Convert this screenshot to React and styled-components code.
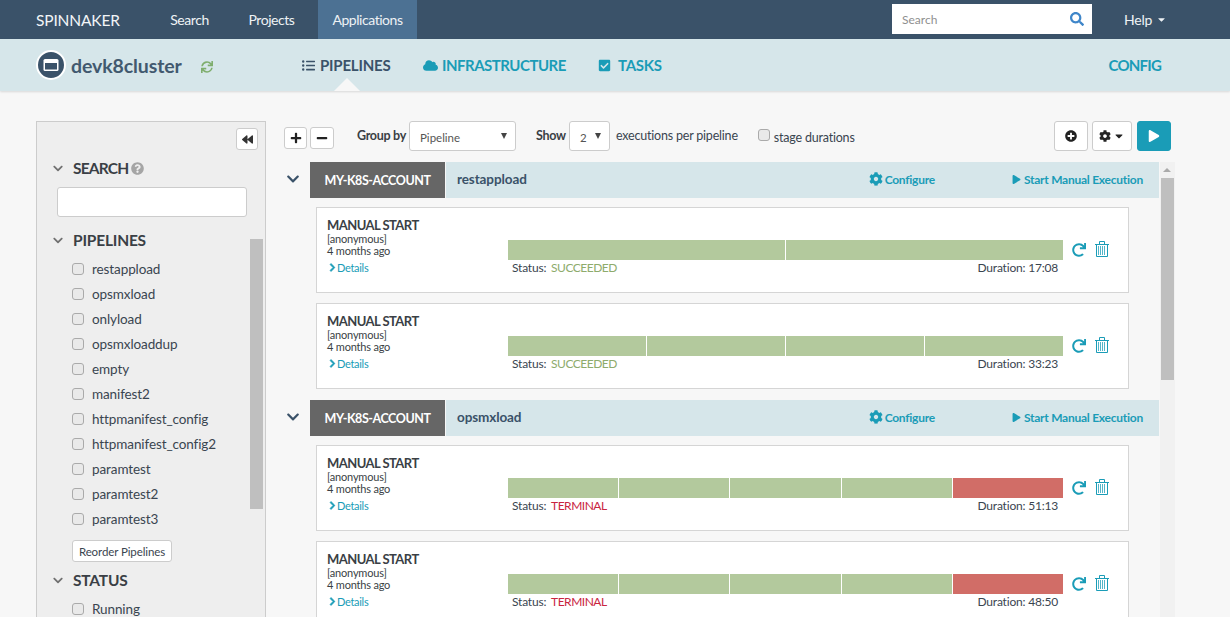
import React from "react";
import styled, { createGlobalStyle } from "styled-components";
import {
  FaListUl, FaCloud, FaCheckSquare, FaCog, FaPlay, FaChevronDown, FaChevronRight, FaSync, FaRedo,
  FaSearch, FaBackward, FaPlus, FaMinus, FaPlusCircle, FaQuestionCircle, FaCaretDown,
} from "react-icons/fa";

const teal = "#1a9cb7";
const navy = "#3a5269";
const ff = `"Lato", "Noto Sans", sans-serif`;

const Global = createGlobalStyle`
  html, body { margin: 0; padding: 0; height: 617px; overflow: hidden; background: #f7f7f7; }
  body { font-family: ${ff}; font-size: 13px; color: #333; }
  * { box-sizing: border-box; }
`;

const Page = styled.div`height: 617px; overflow: hidden; display: flex; flex-direction: column;`;
const TopNav = styled.nav`height: 39px; background: ${navy}; display: flex; align-items: stretch; padding-left: 36px; flex: none; color: #fff;`;
const Brand = styled.div`font-size: 15.5px; width: 134px; display: flex; align-items: center; letter-spacing: -0.15px; color: #f2f5f7;`;
const NavItem = styled.div`
  display: flex; align-items: center; font-size: 14px; letter-spacing: -0.45px; color: #eef2f5;
  margin-left: ${p => p.$ml ?? 0}px; width: ${p => p.$w}px; justify-content: center;
  background: ${p => (p.$active ? "#4c7193" : "transparent")};
`;
const NavSpacer = styled.div`flex: 1;`;
const SearchBox = styled.div`
  width: 200px; height: 30px; margin-top: 4px; background: #fff; display: flex; align-items: center;
  justify-content: space-between; padding: 0 8px 0 10px; font-size: 12px; color: #8f8f8f;
  svg { color: #3f86c9; font-size: 14px; }
`;
const Help = styled.div`width: 138px; padding-left: 32px; display: flex; align-items: center; gap: 4px; font-size: 14px; letter-spacing: -0.2px; color: #eef2f5; svg { font-size: 11px; }`;

const SubHeader = styled.header`
  height: 52px; background: #d6e6ea; flex: none; display: flex; align-items: center; position: relative;
  padding-left: 36px; box-shadow: 0 1px 2px rgba(0,0,0,.12);
`;
const AppBadge = styled.svg`width: 30px; height: 30px; flex: none;`;
const AppName = styled.div`font-size: 19.5px; font-weight: 700; color: ${navy}; margin-left: 5px; width: 130px; letter-spacing: -0.1px; opacity: .95;`;
const SyncIcon = styled(FaSync)`color: #7fae6e; font-size: 12px; margin-top: 4px;`;
const Tabs = styled.div`display: flex; margin-left: 89px; flex: 1; align-items: center;`;
const Tab = styled.div`
  display: flex; align-items: center; gap: ${p => p.$gap ?? 5}px; font-size: 15px; font-weight: 700;
  letter-spacing: ${p => p.$ls ?? -0.2}px; color: ${p => (p.$active ? navy : teal)}; width: ${p => p.$w}px;
  svg { font-size: ${p => p.$icon ?? 13}px; flex: none; }
`;
const ConfigTab = styled(Tab)`width: auto; margin-right: 69px;`;
const Notch = styled.div`
  position: absolute; left: 334px; bottom: 0; width: 0; height: 0;
  border-left: 13px solid transparent; border-right: 13px solid transparent; border-bottom: 13px solid #f7f7f7;
`;

const Body = styled.div`flex: 1; display: flex; padding: 30px 0 0 36px; min-height: 0;`;
const Sidebar = styled.aside`
  width: 230px; flex: none; background: #eee; border: 1px solid #ccc; height: 520px; position: relative;
  padding: 6px 0 0 15px; overflow: hidden;
`;
const CollapseRow = styled.div`display: flex; justify-content: flex-end; padding-right: 7px; height: 22px;`;
const CollapseBtn = styled.div`
  width: 22px; height: 22px; background: #fff; border: 1px solid #ccc; border-radius: 3px; display: flex;
  align-items: center; justify-content: center; color: #333; svg { font-size: 11px; }
`;
const SideHead = styled.div`
  display: flex; align-items: center; height: 20px; font-size: 15.5px; font-weight: 700; color: #3a3f45; letter-spacing: ${p => p.$ls ?? -0.2}px;
  margin-top: ${p => p.$mt ?? 0}px;
  > svg:first-child { color: #707070; font-size: 11px; width: 12px; margin-right: 9px; }
`;
const HelpIcon = styled(FaQuestionCircle)`color: #a5a5a5; font-size: 13px; margin-left: 3px;`;
const SideSearch = styled.div`width: 190px; height: 30px; margin: 9px 0 0 5px; background: #fff; border: 1px solid #ccc; border-radius: 3px;`;
const PipeList = styled.div`margin-top: 6px; display: flex; flex-direction: column;`;
const PipeRow = styled.label`display: flex; align-items: center; height: 25px; padding-left: 20px; gap: 8px; font-size: 13.5px; color: #3a4550; letter-spacing: -0.1px;`;
const Check = styled.span`width: 12px; height: 12px; border: 1px solid #aaa; border-radius: 3px; background: #e9e9e9; display: inline-block; flex: none;`;
const ReorderBtn = styled.div`
  width: 100px; height: 22px; margin: 9px 0 0 20px; background: #fff; border: 1px solid #ccc; border-radius: 3px;
  font-size: 11.5px; display: flex; align-items: center; justify-content: center; color: #3a4550; letter-spacing: -0.1px;
`;
const Thumb = styled.div`position: absolute; left: 213px; top: 117px; width: 13px; height: 270px; background: #bfbfbf;`;

const Main = styled.main`flex: 1; min-width: 0; padding-left: 18px; display: flex; flex-direction: column; padding-right: 55px; position: relative;`;
const Toolbar = styled.div`display: flex; align-items: flex-start; height: 41px; flex: none;`;
const SmallBtn = styled.div`
  width: ${p => p.$w ?? 24}px; height: 22px; margin-top: 6px; margin-right: ${p => p.$mr ?? 0}px; background: #fff; border: 1px solid #ccc; border-radius: 3px;
  display: flex; align-items: center; justify-content: center; color: #222; svg { font-size: 12px; }
`;
const ToolLabel = styled.div`font-size: 12.5px; font-weight: 700; color: #3a3f45; margin-top: 7px; margin-left: ${p => p.$ml}px; letter-spacing: -0.3px; width: ${p => p.$w}px;`;
const Select = styled.div`
  width: ${p => p.$w}px; height: 30px; margin-left: ${p => p.$ml}px; background: #fff; border: 1px solid #ccc; border-radius: 3px; display: flex; align-items: center;
  justify-content: space-between; padding: 2px 8px 0 ${p => p.$pl}px; font-size: 11.5px; color: #555;
  &::after { content: ""; border-left: 3.5px solid transparent; border-right: 3.5px solid transparent; border-top: 6px solid #444; margin-top: -3px; }
`;
const ToolText = styled.div`font-size: 12.5px; color: #3a4550; margin-top: ${p => p.$mt ?? 7}px; margin-left: ${p => p.$ml}px; letter-spacing: -0.2px; white-space: nowrap;`;
const ToolCheck = styled(Check)`margin: 8px 0 0 20px;`;
const ToolRight = styled.div`margin-left: auto; display: flex; gap: 4px; padding-right: 4px;`;
const IconBtn = styled.div`
  width: ${p => p.$w}px; height: 30px; background: ${p => (p.$primary ? teal : "#fff")}; border: 1px solid ${p => (p.$primary ? teal : "#ccc")}; border-radius: 3px;
  display: flex; align-items: center; justify-content: center; gap: 2px; color: ${p => (p.$primary ? "#fff" : "#222")}; margin-left: ${p => p.$ml ?? 0}px;
  svg { font-size: 12px; }
`;

const Scroller = styled.div`flex: 1; min-height: 0; overflow: hidden; position: relative; padding-right: 16px;`;
const Group = styled.section`margin-bottom: 11px;`;
const GroupHead = styled.div`display: flex; align-items: stretch; height: 36px;`;
const GroupChevron = styled.div`width: 26px; display: flex; align-items: center; padding-left: 2px; padding-bottom: 2px; color: ${navy}; svg { font-size: 14px; }`;
const AccountTag = styled.div`width: 135px; background: #666; color: #fff; font-size: 12.5px; font-weight: 700; display: flex; align-items: center; justify-content: center; letter-spacing: -0.45px;`;
const GroupBar = styled.div`flex: 1; background: #d6e6ea; display: flex; align-items: center; padding: 0 16px 2px 11px; margin-left: 1px;`;
const GroupName = styled.div`font-size: 13.5px; font-weight: 700; color: ${navy}; flex: 1; letter-spacing: -0.1px;`;
const GroupLink = styled.div`
  display: flex; align-items: center; gap: ${p => p.$gap ?? 3}px; color: ${teal}; font-size: 12px; font-weight: 700; letter-spacing: -0.25px; margin-right: ${p => p.$mr ?? 0}px;
  svg { font-size: ${p => p.$icon ?? 12}px; }
`;
const Cards = styled.div`padding: 9px 30px 0 32px; display: flex; flex-direction: column; gap: 10px;`;
const Card = styled.article`height: 86px; background: #fff; border: 1px solid #d5d5d5; display: flex; padding: 9px 0 0 10px;`;
const CardLeft = styled.div`width: 181px; flex: none; display: flex; flex-direction: column;`;
const CardTitle = styled.div`font-size: 13px; font-weight: 700; color: #3a3f45; line-height: 16px; letter-spacing: -0.55px;`;
const CardMeta = styled.div`font-size: 11px; line-height: 12px; color: #3a3f45; letter-spacing: -0.2px;`;
const DetailsLink = styled.div`
  display: flex; align-items: center; color: ${teal}; font-size: 11px; margin-top: 4px; padding-left: 1px; gap: 0; letter-spacing: -0.3px; line-height: 13px;
  svg { font-size: 9px; color: ${teal}; stroke: currentColor; stroke-width: 40; }
`;
const CardMid = styled.div`width: 555px; flex: none; padding-top: 23px;`;
const Bar = styled.div`display: flex; height: 20px; gap: 1px;`;
const Seg = styled.div`flex: 1; background: ${p => (p.$red ? "#d16d67" : "#b3c99d")};`;
const StatusRow = styled.div`display: flex; justify-content: space-between; font-size: 12px; padding: 0 5px 0 4px; color: #3a4550; letter-spacing: -0.2px; line-height: 15px;`;
const StatusValue = styled.span`color: ${p => (p.$bad ? "#c9243f" : "#8eab6c")}; letter-spacing: -0.5px; margin-left: 2px;`;
const CardActions = styled.div`display: flex; gap: 9px; padding: 23px 0 0 9px; color: ${teal}; align-items: flex-start; svg { flex: none; }`;
const Repeat = styled(FaRedo)`font-size: 14px; margin-top: 3px;`;
const TrashIcon = styled.svg`margin-top: 1px;`;
const ScrollTrack = styled.div`position: absolute; left: 894px; top: 41px; bottom: 0; width: 15px; background: #f1f1f1;`;
const ScrollThumb = styled.div`margin: 16px 0 0 1px; width: 13px; height: 202px; background: #bfbfbf;`;
const ScrollArrow = styled.div`
  position: absolute; left: 3px; top: 6px; border-left: 4px solid transparent; border-right: 4px solid transparent; border-bottom: 4px solid #aaa;
`;

const Trash = () => (
  <TrashIcon width="14" height="16" viewBox="0 0 14 16" fill="none" stroke="currentColor">
    <path d="M0 3.5h14M4.5 3V0.5h5V3M1.5 4v11.5h11V4" strokeWidth="1" />
    <path d="M3.5 5v9M5.5 5v9M7.5 5v9M9.5 5v9" strokeWidth="1" opacity=".75" />
  </TrashIcon>
);

const pipelines = ["restappload","opsmxload","onlyload","opsmxloaddup","empty","manifest2","httpmanifest_config","httpmanifest_config2","paramtest","paramtest2","paramtest3"];

const groups = [
  { name: "restappload", runs: [
    { segs: 2, status: "SUCCEEDED", dur: "17:08" },
    { segs: 4, status: "SUCCEEDED", dur: "33:23" },
  ]},
  { name: "opsmxload", runs: [
    { segs: 5, status: "TERMINAL", dur: "51:13" },
    { segs: 5, status: "TERMINAL", dur: "48:50" },
  ]},
];

function Run({ segs, status, dur }) {
  const bad = status === "TERMINAL";
  return (
    <Card>
      <CardLeft>
        <CardTitle>MANUAL START</CardTitle>
        <CardMeta>[anonymous]</CardMeta>
        <CardMeta>4 months ago</CardMeta>
        <DetailsLink><FaChevronRight />Details</DetailsLink>
      </CardLeft>
      <CardMid>
        <Bar>{Array.from({ length: segs }, (_, i) => <Seg key={i} $red={bad && i === segs - 1} />)}</Bar>
        <StatusRow>
          <span>Status: <StatusValue $bad={bad}>{status}</StatusValue></span>
          <span>Duration: {dur}</span>
        </StatusRow>
      </CardMid>
      <CardActions><Repeat /><Trash /></CardActions>
    </Card>
  );
}

export default function App() {
  return (
    <Page>
      <Global />
      <TopNav>
        <Brand>SPINNAKER</Brand>
        <NavItem $w={39}>Search</NavItem>
        <NavItem $w={45} $ml={40}>Projects</NavItem>
        <NavItem $w={99} $ml={24} $active>Applications</NavItem>
        <NavSpacer />
        <SearchBox>Search<FaSearch /></SearchBox>
        <Help>Help <FaCaretDown /></Help>
      </TopNav>
      <SubHeader>
        <AppBadge viewBox="0 0 30 30">
          <circle cx="15" cy="15" r="14" fill={navy} stroke="#fff" strokeWidth="2" />
          <rect x="7.5" y="9" width="15" height="12" rx="1.5" fill="#fff" />
          <rect x="9" y="13" width="12" height="6.5" fill={navy} />
        </AppBadge>
        <AppName>devk8cluster</AppName>
        <SyncIcon />
        <Tabs>
          <Tab $active $w={121}><FaListUl />PIPELINES</Tab>
          <Tab $w={175} $gap={4} $icon={15} $ls={-0.5}><FaCloud />INFRASTRUCTURE</Tab>
          <Tab $w={100} $gap={7} $ls={-0.3}><FaCheckSquare />TASKS</Tab>
          <NavSpacer />
          <ConfigTab $ls={-0.8}>CONFIG</ConfigTab>
        </Tabs>
        <Notch />
      </SubHeader>
      <Body>
        <Sidebar>
          <CollapseRow><CollapseBtn><FaBackward /></CollapseBtn></CollapseRow>
          <SideHead $mt={8} $ls={-0.8}><FaChevronDown />SEARCH<HelpIcon /></SideHead>
          <SideSearch />
          <SideHead $mt={13}><FaChevronDown />PIPELINES</SideHead>
          <PipeList>
            {pipelines.map(p => <PipeRow key={p}><Check />{p}</PipeRow>)}
          </PipeList>
          <ReorderBtn>Reorder Pipelines</ReorderBtn>
          <SideHead $mt={8}><FaChevronDown />STATUS</SideHead>
          <PipeList><PipeRow><Check />Running</PipeRow></PipeList>
          <Thumb />
        </Sidebar>
        <Main>
          <Toolbar>
            <SmallBtn $w={23} $mr={3}><FaPlus /></SmallBtn>
            <SmallBtn $w={24}><FaMinus /></SmallBtn>
            <ToolLabel $ml={23} $w={52}>Group by</ToolLabel>
            <Select $w={107} $ml={0} $pl={10}>Pipeline</Select>
            <ToolLabel $ml={20} $w={33}>Show</ToolLabel>
            <Select $w={41} $ml={0} $pl={10}>2</Select>
            <ToolText $ml={6}>executions per pipeline</ToolText>
            <ToolCheck />
            <ToolText $ml={4} $mt={9}>stage durations</ToolText>
            <ToolRight>
              <IconBtn $w={34}><FaPlusCircle /></IconBtn>
              <IconBtn $w={40}><FaCog /><FaCaretDown /></IconBtn>
              <IconBtn $w={34} $primary $ml={1}><FaPlay /></IconBtn>
            </ToolRight>
          </Toolbar>
          <Scroller>
            {groups.map(g => (
              <Group key={g.name}>
                <GroupHead>
                  <GroupChevron><FaChevronDown /></GroupChevron>
                  <AccountTag>MY-K8S-ACCOUNT</AccountTag>
                  <GroupBar>
                    <GroupName>{g.name}</GroupName>
                    <GroupLink $mr={77} $icon={14} $gap={2}><FaCog />Configure</GroupLink>
                    <GroupLink $icon={9}><FaPlay />Start Manual Execution</GroupLink>
                  </GroupBar>
                </GroupHead>
                <Cards>{g.runs.map((r, i) => <Run key={i} {...r} />)}</Cards>
              </Group>
            ))}
          </Scroller>
          <ScrollTrack><ScrollArrow /><ScrollThumb /></ScrollTrack>
        </Main>
      </Body>
    </Page>
  );
}
